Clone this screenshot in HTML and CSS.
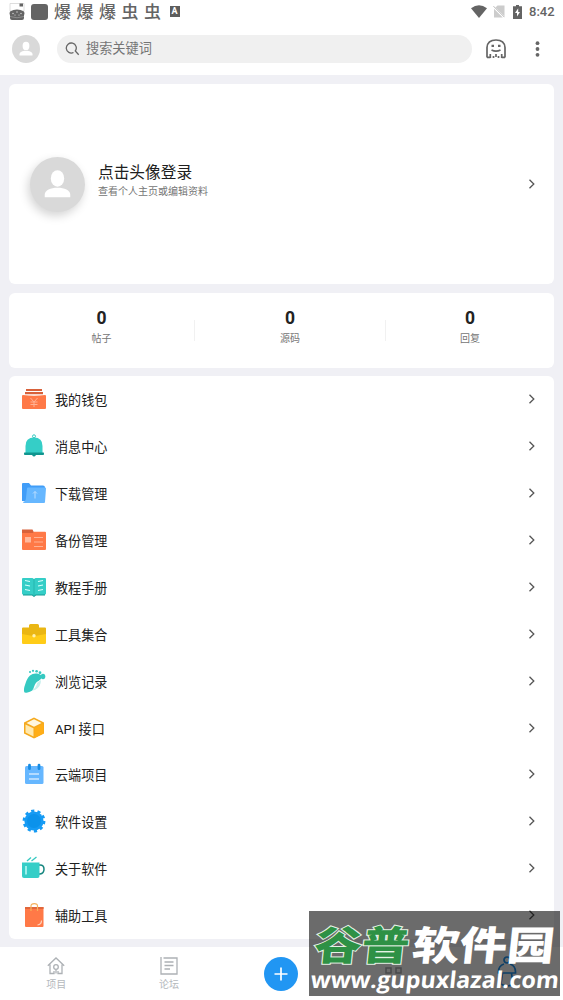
FILE: index.html
```html
<!DOCTYPE html>
<html lang="zh-CN">
<head>
<meta charset="utf-8">
<title>我的</title>
<link rel="stylesheet" href="styles.css">
</head>
<body>
<svg class="defs" width="0" height="0">
  <symbol id="chev" viewBox="0 0 8 12"><path d="M1.500 1.800 5.800 6 1.500 10.200" fill="none" stroke="#555" stroke-width="1.300"/></symbol>
  <symbol id="person" viewBox="0 0 28 28"><ellipse cx="14" cy="10.900" rx="3.400" ry="4.200" fill="#fff"/><path d="M7.500 20.500v-1.300c0-2.300 3-3.500 6.500-3.500s6.500 1.200 6.500 3.500v1.300z" fill="#fff"/></symbol>
</svg>
<header class="top">
  <div class="status">
    <div class="status-left">
      <svg width="16" height="17" viewBox="0 0 16 17"><path d="M1 .5h14V8H1z" fill="#fff" stroke="#d5d5d5" stroke-width=".8"/><path d="M10.500.500h3.500v3h-3.500z" fill="#646464"/><path d="M1 8.500Q8 4.500 15 8.500q1 1.500 0 4v2.500q0 2-2 2H3q-2 0-2-2v-2.500q-1-2.500 0-4z" fill="#646464"/><path d="M1 13.500q7 2.500 14 0" fill="none" stroke="#aaa" stroke-width=".6"/><g fill="#ddd"><circle cx="4" cy="10.500" r=".7"/><circle cx="8" cy="9" r=".7"/><circle cx="12" cy="10.500" r=".7"/><circle cx="6" cy="12" r=".6"/><circle cx="10" cy="12" r=".6"/></g></svg>
      <i class="block"></i>
      <span>爆</span><span>爆</span><span>爆</span><span>虫</span><span>虫</span>
      <b class="abox">A</b>
    </div>
    <div class="status-right">
      <svg width="16" height="13" viewBox="0 0 16 13"><path d="M0 3.200Q8-2.600 16 3.200L8 13z" fill="#646464"/></svg>
      <svg width="12" height="13" viewBox="0 0 12 13"><path d="M4.500.500h7v10.800L2.500 2.500zM1 3.800 9.800 12.500H1z" fill="#ccc"/><path d="m.5 1.200 11 11" stroke="#b5b5b5"/></svg>
      <svg width="9" height="14" viewBox="0 0 9 14"><path d="M3 0h3v1.300h3V14H0V1.300h3z" fill="#646464"/><path d="M5.200 3.300 2 8h2v3.500L7 7H5.200z" fill="#fff"/></svg>
      <span class="clock">8:42</span>
    </div>
  </div>
  <div class="searchbar">
    <svg class="avatar-sm" viewBox="0 0 28 28"><circle cx="14" cy="14" r="14" fill="#d9d9d9"/><use href="#person"/></svg>
    <div class="search">
      <svg width="15" height="15" viewBox="0 0 15 15" fill="none" stroke="#666" stroke-width="1.300"><path d="M8.500 10.500A5 5 0 1 1 10.300 9L13.700 12.800"/></svg>
      <span>搜索关键词</span>
    </div>
    <svg class="ghost" width="20" height="20" viewBox="0 0 20 20" fill="none" stroke="#666" stroke-width="1.700"><path d="M1 18.500V8.500Q1.500 1 10 1t9 7.500v10M1 18.300h3.300M15.700 18.300H19M4.300 19v-4M15.700 19v-4M7.500 19v-2M12.500 19v-2M10 18v-3M5.500 11q4.500 2.200 9 0"/><path d="M5.500 6.900h2.500M12 6.900h2.500" stroke-width="2.400"/></svg>
    <svg class="dots" width="5" height="16" viewBox="0 0 5 16" fill="#666"><circle cx="2.500" cy="2.200" r="1.900"/><circle cx="2.500" cy="8" r="1.900"/><circle cx="2.500" cy="13.800" r="1.900"/></svg>
  </div>
</header>
<main>
  <section class="card profile">
    <div class="avatar"><svg viewBox="0 0 28 28"><use href="#person"/></svg></div>
    <div class="who"><h1>点击头像登录</h1><p>查看个人主页或编辑资料</p></div>
    <svg class="chev"><use href="#chev"/></svg>
  </section>
  <section class="card stats">
    <div class="stat"><b>0</b><span>帖子</span></div><i></i>
    <div class="stat"><b>0</b><span>源码</span></div><i></i>
    <div class="stat"><b>0</b><span>回复</span></div>
  </section>
  <section class="card menu">
    <div class="row"><svg class="ico" viewBox="0 0 24 24"><path d="M4 2h16v1.900H4zM3 5h18v2.200H3z" fill="#d8613a"/><path d="M1 8q11 1.500 22 0 1 0 1 1v12q0 1-1 1H1q-1 0-1-1V9q0-1 1-1z" fill="#ff7947"/><path d="m8.500 11 3.500 4 3.500-4M12 15v5M8.500 15h7M8.500 17.500h7" fill="none" stroke="#ffb294"/></svg><span>我的钱包</span><svg class="chev"><use href="#chev"/></svg></div>
    <div class="row"><svg class="ico" viewBox="0 0 24 24"><circle cx="12" cy="2.300" r="1.500" fill="none" stroke="#35c9c1"/><path d="M3.500 19.500V12q0-8.500 8.500-8.500t8.500 8.500v7.500z" fill="#35cec7"/><path d="M2.500 18.500h19q.5 0 .5 1t-.5 1.500H14q-2 3-4 0H2.500q-.5-.500-.5-1.500t.5-1z" fill="#10958f"/></svg><span>消息中心</span><svg class="chev"><use href="#chev"/></svg></div>
    <div class="row"><svg class="ico" viewBox="0 0 24 24"><path d="M0 3q0-1 1-1h6l2 2.500h12q2 0 2 2V20H0z" fill="#409df8"/><path d="M5 7.500q0-1 1-1h17q1 0 1 1L23 21q0 1-1 1H2q-1 0-1-1 3-1 3-4z" fill="#66b7ff"/><path d="M13 17.500v-7M11 12.500l2-2 2 2" fill="none" stroke="#b9ddff"/></svg><span>下载管理</span><svg class="chev"><use href="#chev"/></svg></div>
    <div class="row"><svg class="ico" viewBox="0 0 24 24"><path d="M0 1.500h10.500l2 4H0z" fill="#d8613a"/><path d="M0 5h11l1-1.300h11q1 0 1 1V21q0 1-1 1H1q-1 0-1-1z" fill="#ff7947"/><path d="M3 9h6v5.500H3z" fill="#ffb99d"/><path d="M12 9.500h9M12 14h9M12 18.500h9" stroke="#ffb294" stroke-width="1.200"/></svg><span>备份管理</span><svg class="chev"><use href="#chev"/></svg></div>
    <div class="row"><svg class="ico" viewBox="0 0 24 24"><path d="M1 18h22v2.500h-9l-2 1.500-2-1.500H1z" fill="#159b94"/><path d="M0 4q0-1 1-1h9.500L12 4l1.500-1H23q1 0 1 1v14.500q0 1-1 1h-9.500L12 21l-1.500-1.500H1q-1 0-1-1z" fill="#35cec7"/><path d="M12 4v17" stroke="#1caea7" stroke-width=".7"/><path d="M3 5.500 8 6.500M3 10 8 11M3 14.500l5 1M21 5.500l-5 1M21 10l-5 1M21 14.500l-5 1" stroke="#d8fffc" stroke-width="1.100"/></svg><span>教程手册</span><svg class="chev"><use href="#chev"/></svg></div>
    <div class="row"><svg class="ico" viewBox="0 0 24 24"><path d="M7 5.500V3.500q0-1.500 1.500-1.500h7Q17 2 17 3.500v2h6q1 0 1 1v8H0v-8q0-1 1-1z" fill="#eab613"/><path d="M0 12 11 14h2l11-2v8.500q0 1.500-1 1.500H1q-1 0-1-1.500z" fill="#ffcc18"/><circle cx="12" cy="13.700" r="1.700" fill="#fff1ae"/></svg><span>工具集合</span><svg class="chev"><use href="#chev"/></svg></div>
    <div class="row"><svg class="ico" viewBox="0 0 24 24"><path d="M8 22q7-3 7-8l4-3q0 7-6 10z" fill="#c8f0ed"/><path d="M2.300 23.300q-1-3 1-8.300Q5 9 8 6.500t7-2q4 .5 5 3-.5 3-3.500 4.500-3 1-4.500 6-1 4.500-6.500 5.500-2.500.5-3.200-.2z" fill="#35c9c1"/><g fill="#35c9c1"><ellipse cx="21" cy="7.500" rx="2.300" ry="2.700"/><circle cx="18" cy="3.700" r="1.400"/><circle cx="14.600" cy="2.200" r="1.300"/><circle cx="11" cy="1.800" r="1.100"/><circle cx="8" cy="2.900" r="1"/></g></svg><span>浏览记录</span><svg class="chev"><use href="#chev"/></svg></div>
    <div class="row"><svg class="ico" viewBox="0 0 24 24"><path d="m12 1.500 10 5v11l-10 5-10-5v-11z" fill="#f5a91d"/><path d="m12 3.200 7.500 3.800L12 10.800 4.500 7z" fill="#fff7df"/><path d="m3.500 8.500 8 3.700v8.300l-8-4z" fill="#ffe9ae"/><path d="m12.500 12 9-4.500v10l-9 4.500z" fill="#ffae17"/></svg><span>API 接口</span><svg class="chev"><use href="#chev"/></svg></div>
    <div class="row"><svg class="ico" viewBox="0 0 24 24"><rect x="3" y="4" width="18.500" height="18" rx="1.500" fill="#66b7ff"/><path d="M7.500 3.200v3.500M17 3.200v3.500" stroke="#168ce4" stroke-width="2.800" stroke-linecap="round"/><path d="M7 12h10M7 17h10" stroke="#fff" stroke-width="1.200"/></svg><span>云端项目</span><svg class="chev"><use href="#chev"/></svg></div>
    <div class="row"><svg class="ico" viewBox="0 0 24 24"><circle cx="12" cy="12" r="9.800" fill="none" stroke="#169bf4" stroke-width="3.200" stroke-dasharray="3.100 3.057"/><circle cx="12" cy="12" r="9.600" fill="#169bf4"/><circle cx="12" cy="12" r="7" fill="#0b92eb"/></svg><span>软件设置</span><svg class="chev"><use href="#chev"/></svg></div>
    <div class="row"><svg class="ico" viewBox="0 0 24 24"><path d="m5 5 4-3.500M9.500 5l5-4" stroke="#35c9c1" stroke-width="1.300"/><path d="M16.500 9h1.500q4 0 4 4.200T18 18h-1.500" fill="none" stroke="#16867f" stroke-width="1.500"/><path d="M0 6.500h17.500V20q0 2-2 2H2q-2 0-2-2z" fill="#35cec7"/><path d="M4 10v8.500" stroke="#c7fffb" stroke-width="1.400"/></svg><span>关于软件</span><svg class="chev"><use href="#chev"/></svg></div>
    <div class="row"><svg class="ico" viewBox="0 0 24 24"><path d="M3 4h18.500v19q0 1-1 1H4q-1 0-1-1z" fill="#ff7947"/><path d="M3 4h18.500v2H3z" fill="#e0663b"/><path d="M9 8V3q0-2.300 3.300-2.300T15.500 3v5" fill="none" stroke="#f6b15d" stroke-width="1.200"/><path d="M19.500 17.500q0 4-4 4.500" fill="none" stroke="#ffd2bc" stroke-width="1.200"/></svg><span>辅助工具</span><svg class="chev"><use href="#chev"/></svg></div>
  </section>
</main>
<nav class="tabs">
  <div class="tab"><svg width="18" height="18" viewBox="0 0 18 18" fill="none" stroke="#adb1b5" stroke-width="1.300"><path d="M.8 8.800 9 1l8.200 7.800M3 7.500v9h4V14M15 7.500v9h-4V14M9 16.500v-4"/><circle cx="9" cy="10" r="2.300"/></svg><span>项目</span></div>
  <div class="tab"><svg width="18" height="18" viewBox="0 0 18 18" fill="none" stroke="#adb1b5" stroke-width="1.300"><path d="M1 0v17h16V1H3.500M4.500 5h9M4.500 8.500h9M4.500 12h5.500"/></svg><span>论坛</span></div>
  <div class="tab"><div class="plus"><svg width="14" height="14" viewBox="0 0 14 14"><path d="M7 .5v13M.5 7h13" stroke="#fff" stroke-width="1.700"/></svg></div></div>
  <div class="tab"><svg width="18" height="18" viewBox="0 0 18 18" fill="none" stroke="#adb1b5" stroke-width="1.500"><path d="M1 1h5v5H1zM11 1h5v5h-5zM1 11h5v5H1zM11 11h5v5h-5z"/></svg></div>
  <div class="tab me"><svg width="20" height="34" viewBox="0 0 20 34" fill="none" stroke="#2196f3" stroke-width="1.700"><circle cx="10" cy="4" r="3"/><path d="M7 8Q1 10 1.500 17h4L4 28q6 4 12 0l-1.500-11h4q.5-7-5.500-9M5.500 17h9"/></svg></div>
</nav>
<svg class="watermark" width="251" height="85" viewBox="0 0 251 85">
  <rect width="251" height="85" fill="#000" fill-opacity=".58"/>
  <g class="wm-title" transform="translate(4 49) skewX(-6)">
    <text class="wm-green" textLength="95" lengthAdjust="spacingAndGlyphs">谷普</text>
    <text class="wm-white" x="98" textLength="142" lengthAdjust="spacingAndGlyphs">软件园</text>
  </g>
  <text class="wm-url" transform="translate(1 77) skewX(-6)" textLength="248" lengthAdjust="spacingAndGlyphs">www.gupuxlazal.com</text>
</svg>
</body>
</html>
```

FILE: styles.css
```css
* { box-sizing: border-box; }
body {
  margin: 0;
  width: 563px;
  height: 1000px;
  overflow: hidden;
  position: relative;
  display: flex;
  flex-direction: column;
  background: #f0f0f5;
  color: #222;
  font-family: Roboto, "Noto Sans CJK SC", sans-serif;
}
svg { display: block; flex: none; }
.defs { position: absolute; }
h1, p { margin: 0; font-weight: 400; }

.top { height: 75px; background: #fff; flex: none; }
.status {
  height: 23px;
  padding: 0 8px 0 9px;
  display: flex;
  justify-content: space-between;
  color: #646464;
}
.status-left { display: flex; align-items: center; font-size: 17px; font-weight: 500; line-height: 23px; }
.status-left span { width: 22.500px; padding-top: 1px; }
.block { width: 17px; height: 16px; border-radius: 3px; background: #646464; margin: 0 6px 0 6px; }
.abox {
  width: 10px; height: 11px; margin-left: 3px;
  background: #5d5d5d; color: #fff;
  font-size: 9px; line-height: 11px; text-align: center;
}
.status-right { display: flex; align-items: center; }
.status-right svg:nth-child(2) { margin-left: 6px; }
.status-right svg:nth-child(3) { margin-left: 8px; }
.clock { font-size: 13px; font-weight: 500; margin-left: 7px; width: 26px; white-space: nowrap; }
.searchbar { height: 52px; padding-left: 12px; display: flex; align-items: center; }
.avatar-sm { width: 28px; height: 28px; }
.search {
  width: 415px; height: 28px; margin-left: 17px; padding-left: 8px;
  border-radius: 14px; background: #f0f0f0;
  display: flex; align-items: center; gap: 6px;
  font-size: 13.200px; color: #757575;
}
.search span { line-height: 18px; }
.ghost { margin-left: 14px; }
.dots { margin-left: 29px; }

main { padding: 9px 9px 0; display: flex; flex-direction: column; gap: 8.500px; flex: none; height: 872px; }
.card { background: #fff; border-radius: 6px; flex: none; }
.chev { width: 8px; height: 12px; margin-left: auto; }
.profile { height: 200px; padding: 0 18.500px 0 21px; display: flex; align-items: center; }
.avatar {
  width: 55px; height: 55px; border-radius: 50%;
  background: #d9d9d9; box-shadow: -2px 4px 10px #0000002b;
}
.avatar svg { width: 55px; height: 55px; }
.who { margin-left: 13px; padding-bottom: 6px; }
.who h1 { font-size: 15.700px; line-height: 22px; color: #202020; }
.who p { font-size: 10px; line-height: 16px; color: #757575; }

.stats { height: 75px; display: flex; }
.stats i { width: 1px; height: 21px; margin-top: 27px; background: #f1f1f1; }
.stat { flex: none; width: 185px; display: flex; flex-direction: column; align-items: center; padding-top: 15px; }
.stat:nth-child(3) { width: 190px; }
.stat:nth-child(5) { width: 168px; }
.stat b { font-size: 17.500px; line-height: 21px; font-weight: 700; }
.stat span { font-size: 10px; line-height: 20px; color: #757575; }

.menu { height: 562.500px; display: flex; flex-direction: column; }
.row {
  flex: 1; min-height: 0; padding: 0 18.500px 0 13px;
  display: flex; align-items: center;
  font-size: 13.100px; color: #202020;
}
.row span { line-height: 19px; padding-top: 3px; }
.ico { width: 24px; height: 24px; margin-right: 9px; }

.tabs { height: 53px; flex: none; background: #fff; display: flex; }
.tab {
  flex: 1; display: flex; flex-direction: column; align-items: center;
  padding-top: 10px; color: #b4b8bc; font-size: 10px;
}
.tab span { line-height: 14px; margin-top: 3px; }
.plus {
  width: 34px; height: 34px; border-radius: 50%; background: #2196f3;
  display: flex; align-items: center; justify-content: center;
}
.me { padding-top: 9px; }

.watermark { position: absolute; left: 309px; top: 910.500px; }
.wm-title { font: 900 40px "Noto Sans CJK SC", sans-serif; }
.wm-green { fill: #2e9145; stroke: #e5f2e5; stroke-width: 2px; paint-order: stroke; }
.wm-white { fill: #fff; }
.wm-url { font: 700 23px "Open Sans", "Noto Sans", sans-serif; fill: #fff; }
```
